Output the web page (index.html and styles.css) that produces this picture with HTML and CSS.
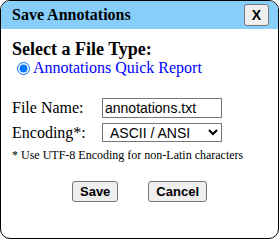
FILE: index.html
```html
<!DOCTYPE html>
<html>
<head>
<meta charset="utf-8">
<link rel="stylesheet" href="styles.css">
</head>
<body>
<div class="dialog">
  <div class="header">
    <span class="title">Save Annotations</span>
    <button class="close" type="button">X</button>
  </div>
  <div class="content">
    <h2 class="section-title">Select a File Type:</h2>
    <label class="choice"><input class="radio" type="radio" name="ftype" checked><span>Annotations Quick Report</span></label>
    <div class="fields">
      <label class="field-label" for="fname">File Name:</label>
      <input class="text-input" id="fname" type="text" value="annotations.txt">
      <label class="field-label" for="enc">Encoding*:</label>
      <select class="select" id="enc"><option>ASCII / ANSI</option><option>UTF-8</option></select>
    </div>
    <p class="note">* Use UTF-8 Encoding for non-Latin characters</p>
    <div class="actions">
      <button class="btn" type="button">Save</button>
      <button class="btn" type="button">Cancel</button>
    </div>
  </div>
</div>
</body>
</html>
```
FILE: styles.css
```css
html, body {
  margin: 0;
  padding: 0;
  background: #ffffff;
}
.dialog {
  box-sizing: border-box;
  width: 279px;
  height: 239px;
  border: 1px solid #000;
  border-radius: 10px;
  overflow: hidden;
  background: #fff;
  font-family: "Liberation Serif", "Times New Roman", serif;
  color: #000;
}
.header {
  height: 28px;
  background: #87cefa;
  display: flex;
  align-items: center;
  justify-content: space-between;
  padding: 0 9px 0 11px;
}
.title {
  font-weight: 700;
  font-size: 16px;
}
.close {
  box-sizing: border-box;
  width: 25px;
  height: 22px;
  margin: 0;
  padding: 0;
  font: 700 14px "Liberation Sans", Arial, sans-serif;
  color: #000;
  background: #efefef;
  border: 1px solid #767676;
  border-radius: 3px;
}
.content {
  padding: 10px 12px 0 11px;
}
.section-title {
  margin: 0;
  font-size: 18px;
  line-height: 20px;
  font-weight: 700;
}
.choice {
  display: flex;
  align-items: center;
  height: 18px;
  font-size: 16px;
  line-height: 18px;
  color: #0000ff;
}
.radio {
  width: 13px;
  height: 13px;
  margin: 0 3px 0 5px;
}
.fields {
  margin-top: 21px;
  display: grid;
  grid-template-columns: 90px 120px;
  grid-template-rows: 20px 19px;
  row-gap: 5px;
  align-items: center;
}
.field-label {
  font-size: 16px;
  line-height: 18px;
}
.text-input {
  box-sizing: border-box;
  width: 120px;
  height: 20px;
  margin: 0;
  padding: 0 2px;
  border: 1px solid #767676;
  font: 14px "Liberation Sans", Arial, sans-serif;
  color: #000;
}
.select {
  box-sizing: border-box;
  width: 120px;
  height: 19px;
  margin: 0;
  padding: 0 0 0 3px;
  border: 1px solid #767676;
  border-radius: 0;
  background: #fff;
  font: 14px "Liberation Sans", Arial, sans-serif;
  color: #000;
}
.note {
  margin: 6px 0 0 0;
  font-size: 12px;
  line-height: 14px;
}
.actions {
  margin-top: 19px;
  display: flex;
  justify-content: center;
  gap: 30px;
  padding-left: 1px;
}
.btn {
  box-sizing: border-box;
  height: 21px;
  margin: 0;
  padding: 0 7px;
  font: 700 13px "Liberation Sans", Arial, sans-serif;
  color: #000;
  background: #efefef;
  border: 1px solid #767676;
  border-radius: 3px;
}
```
